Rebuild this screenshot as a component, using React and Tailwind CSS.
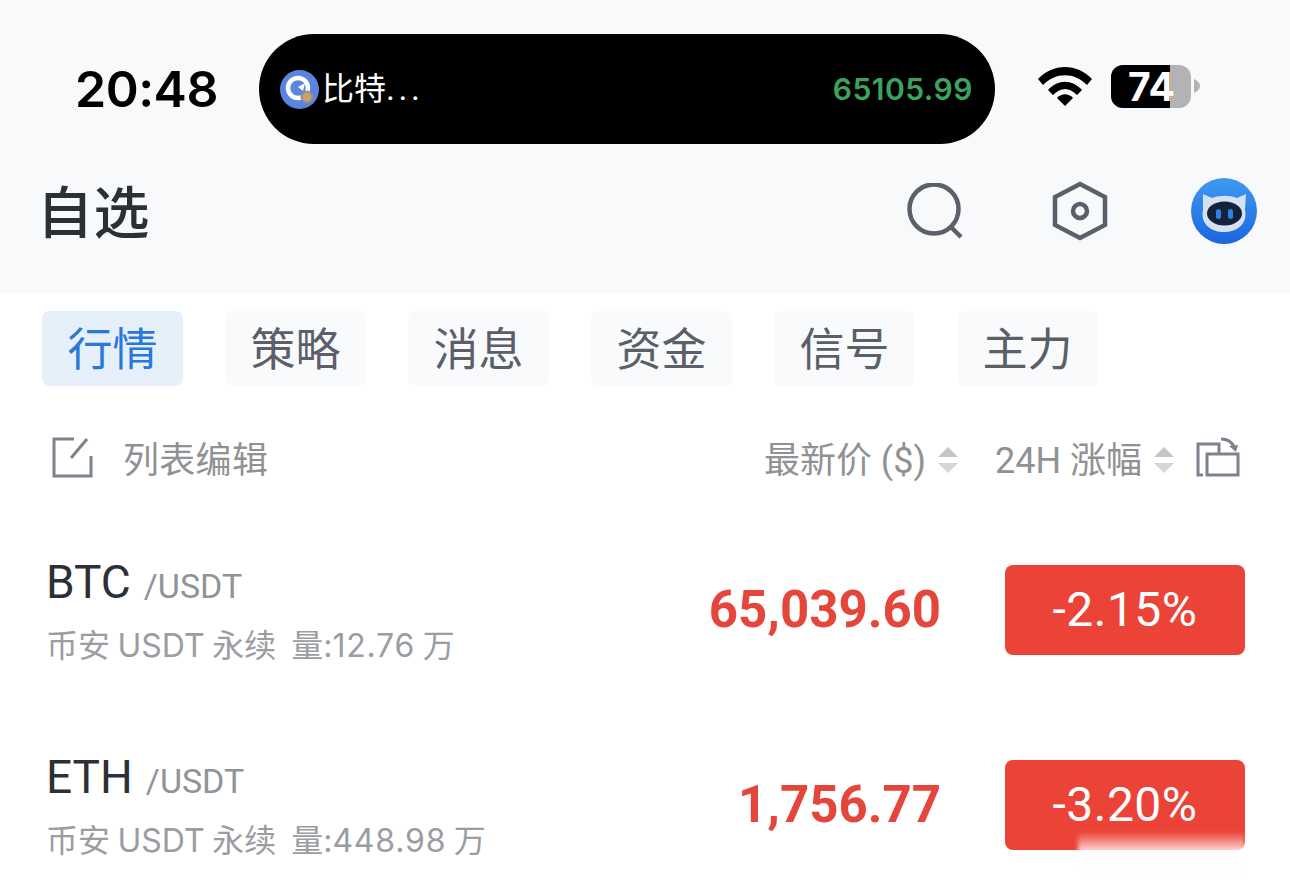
import React from "react";

const cjk = "font-['Roboto','Noto_Sans_CJK_SC',sans-serif]";
const inter = "font-['Inter','Noto_Sans_CJK_SC',sans-serif]";

const tabs = ["行情", "策略", "消息", "资金", "信号", "主力"];

const coins = [
  { name: "BTC", volume: "12.76", price: "65,039.60", change: "-2.15%" },
  { name: "ETH", volume: "448.98", price: "1,756.77", change: "-3.20%" },
];

function SortArrows() {
  return (
    <svg width="20" height="28" viewBox="0 0 20 28" className="mt-[2px] shrink-0">
      <path d="M10 1 L20 11 H0 Z" fill="#c4c6c9" />
      <path d="M10 27 L20 17 H0 Z" fill="#d4d6d9" />
    </svg>
  );
}

function WifiIcon() {
  return (
    <svg width="56" height="42" viewBox="0 0 56 42" className="-mt-[6px]">
      <path d="M1 14 C16 -2 40 -2 55 14 L50 20 C37 7 19 7 6 20 Z" fill="#000" />
      <path d="M11 25 C21 14 35 14 45 25 L40 30 C32 22 24 22 16 30 Z" fill="#000" />
      <path d="M20 33 C25 28 31 28 36 33 L28 41 Z" fill="#000" />
    </svg>
  );
}

function Battery() {
  return (
    <div className="-mt-[6px] flex items-center">
      <div className="relative flex h-[43px] w-[80px] rounded-[12px] bg-[#b3b3b5]">
        <div className="h-full w-[59px] rounded-l-[12px] bg-black" />
        <span className="absolute left-[17px] top-0 text-[39px] font-bold leading-[44px] text-white font-['Inter',sans-serif]">
          74
        </span>
      </div>
      <svg width="6" height="14" viewBox="0 0 6 14" className="ml-[3px]">
        <path d="M0 0 C4 2 6 4 6 7 C6 10 4 12 0 14 Z" fill="#b3b3b5" />
      </svg>
    </div>
  );
}

function AppBadge() {
  return (
    <svg width="39" height="39" viewBox="0 0 39 39" className="shrink-0">
      <circle cx="19.5" cy="19.5" r="19.5" fill="#5a84e0" />
      <circle cx="18" cy="18" r="10" fill="none" stroke="#fff" strokeWidth="4.5" />
      <path d="M18 17 L25 13 L23 21 Z" fill="#fff" />
      <circle cx="27" cy="27" r="5.5" fill="#c9a468" stroke="#8d8f96" strokeWidth="2" />
    </svg>
  );
}

function RobotAvatar() {
  return (
    <svg width="66" height="66" viewBox="0 0 66 66">
      <defs>
        <linearGradient id="avatarBg" x1="0" y1="0" x2="0" y2="1">
          <stop offset="0" stopColor="#3f9bf0" />
          <stop offset="1" stopColor="#1a66e0" />
        </linearGradient>
      </defs>
      <circle cx="33" cy="33" r="33" fill="url(#avatarBg)" />
      <path
        d="M12 16 L21 20 C29 17 38 17 46 20 L55 16 L54 32 C57 46 46 54 33 54 C20 54 9 46 12 32 Z"
        fill="#d5e0f0"
      />
      <ellipse cx="33.5" cy="35.5" rx="17.5" ry="12" fill="#162238" />
      <rect x="25" y="31" width="5" height="10" rx="2.5" fill="#2b82e8" />
      <rect x="37" y="31" width="5" height="10" rx="2.5" fill="#2b82e8" />
    </svg>
  );
}

function Header() {
  return (
    <header className="h-[293px] bg-[#f8f9fb]">
      <div className="flex items-center pt-[34px]">
        <span className="ml-[75px] w-[184px] text-[50px] font-semibold leading-[110px] tracking-[-0.5px] text-black font-['Inter',sans-serif]">
          20:48
        </span>
        <div className="flex h-[110px] w-[736px] items-center justify-between rounded-[55px] bg-black pl-[21px] pr-[22px]">
          <div className="flex items-center gap-[3px]">
            <AppBadge />
            <span className={`${cjk} pb-[3px] text-[32px] leading-none text-white`}>
              比特<span className="tracking-[3.5px] text-[34px]">...</span>
            </span>
          </div>
          <span className="text-[30px] font-semibold tracking-[0.5px] text-[#3ca35f] font-['Inter',sans-serif]">
            65105.99
          </span>
        </div>
        <div className="ml-[42px] flex items-center gap-[18px]">
          <WifiIcon />
          <Battery />
        </div>
      </div>
      <div className="flex items-center pl-[37px] pr-[33px] pt-[34px]">
        <h1 className={`${cjk} flex-1 pt-[6px] text-[56px] font-medium leading-[60px] tracking-[0.5px] text-[#2c2f36]`}>自选</h1>
        <svg width="56" height="56" viewBox="0 0 56 56" className="mr-[89px]">
          <circle cx="27" cy="26" r="24.5" fill="none" stroke="#5a5f69" strokeWidth="4.5" />
          <path d="M44 44 L54 54" stroke="#5a5f69" strokeWidth="4.5" />
        </svg>
        <svg width="56" height="60" viewBox="0 0 56 60" className="mr-[83px]">
          <path d="M28 3 L53 16 V44 L28 57 L3 44 V16 Z" fill="none" stroke="#5a5f69" strokeWidth="4.5" strokeLinejoin="miter" />
          <circle cx="28" cy="30" r="7" fill="none" stroke="#5a5f69" strokeWidth="4.5" />
        </svg>
        <RobotAvatar />
      </div>
    </header>
  );
}

function Toolbar() {
  return (
    <div className="flex h-[146px] items-center pl-[52px] pr-[50px]">
      <svg width="41" height="41" viewBox="0 0 41 41" className="mr-[30px] -mt-[3px]">
        <path d="M22 2 H2 V39 H39 V19" fill="none" stroke="#7c838d" strokeWidth="3" />
        <path d="M19 21 L35 2" stroke="#7c838d" strokeWidth="3" />
      </svg>
      <span className={`${cjk} flex-1 pt-[4px] text-[36px] leading-none tracking-[0.3px] text-[#8f9194]`}>列表编辑</span>
      <span className={`${cjk} mr-[12px] pt-[4px] text-[36px] leading-none text-[#8f9194]`}>最新价 ($)</span>
      <SortArrows />
      <span className={`${cjk} ml-[37px] mr-[12px] pt-[4px] text-[36px] leading-none text-[#8f9194]`}>24H 涨幅</span>
      <SortArrows />
      <svg width="44" height="40" viewBox="0 0 44 40" className="ml-[22px] -mt-[5px]">
        <path d="M7 38 H2 V7 H23 V17" fill="none" stroke="#7c838d" strokeWidth="3" />
        <path d="M11 17 H42 V38 H11 Z" fill="none" stroke="#7c838d" strokeWidth="3" />
        <path d="M25 2 C32 2 36 5 38 10" fill="none" stroke="#7c838d" strokeWidth="3" />
        <path d="M33 9 L42 8 L40 15 Z" fill="#7c838d" />
      </svg>
    </div>
  );
}

function CoinRow({ coin }) {
  return (
    <div className="flex h-[195px] items-center pl-[47px] pr-[45px]">
      <div className="flex-1">
        <div className={`${cjk} -ml-[1px] flex items-baseline`}>
          <span className="text-[46px] leading-[56px] text-[#2c2f36]">{coin.name}</span>
          <span className="ml-[13px] text-[34px] leading-[56px] text-[#8f9499]">/USDT</span>
        </div>
        <div className={`${inter} -ml-[1px] mt-[12px] text-[32px] leading-[40px] text-[#9a9da1] [word-spacing:-1.5px]`}>
          币安 USDT 永续&nbsp; 量:<span className="tracking-[0.8px]">{coin.volume}</span> 万
        </div>
      </div>
      <span className="mr-[64px] mt-[1px] text-[51px] font-bold text-[#e5463b] font-['Roboto',sans-serif]">
        {coin.price}
      </span>
      <div className="flex h-[90px] w-[240px] items-center justify-center rounded-[8px] bg-[#ec4338] text-[48px] tracking-[0.5px] text-white font-['Roboto',sans-serif]">
        {coin.change}
      </div>
    </div>
  );
}

export default function App() {
  return (
    <div className="relative h-[884px] w-[1290px] overflow-hidden bg-white">
      <Header />
      <div className={`${cjk} flex gap-[42px] pl-[42px] pt-[18px]`}>
        {tabs.map((tab, i) => (
          <div
            key={tab}
            className={
              i === 0
                ? "flex h-[75px] w-[141px] items-center justify-center rounded-[8px] bg-[#e6f0fb] pt-[4px] text-[45px] text-[#2a78d8]"
                : "flex h-[75px] w-[141px] items-center justify-center rounded-[8px] bg-[#f9fafc] pt-[4px] text-[45px] text-[#5a5f68]"
            }
          >
            {tab}
          </div>
        ))}
      </div>
      <Toolbar />
      <div className="-mt-[20px]">
        {coins.map((coin) => (
          <CoinRow key={coin.name} coin={coin} />
        ))}
      </div>
      {/* smeared stamp over the lower right corner */}
      <div className="absolute left-[1078px] top-[832px] h-[38px] w-[167px] bg-gradient-to-b from-white/0 via-white/80 to-white blur-[2px]" />
    </div>
  );
}
